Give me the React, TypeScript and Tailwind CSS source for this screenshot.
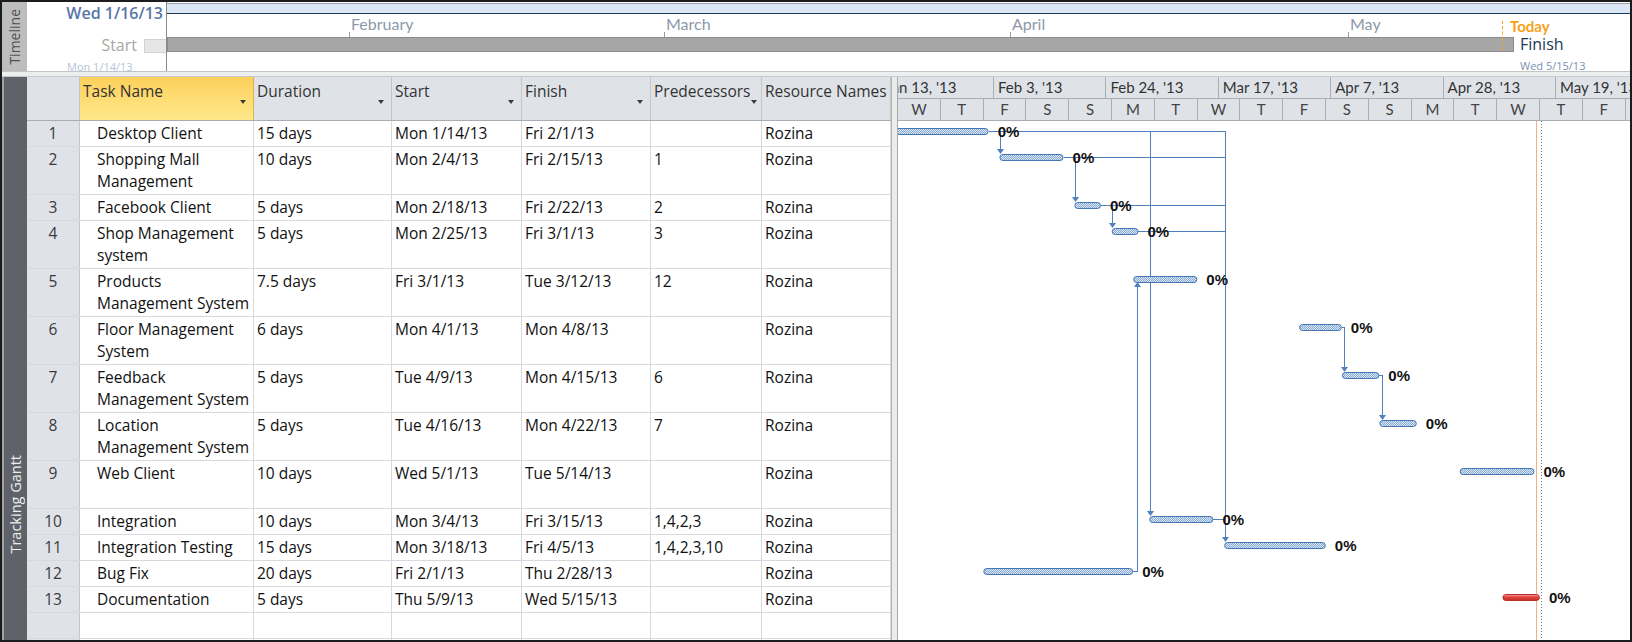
import React from 'react'

type Task = {
  id: number
  name: string[]
  duration: string
  start: string
  finish: string
  pred: string
  tall: boolean
  from: number // days since Jan 13 '13
  to: number
  late?: boolean
}

const tasks: Task[] = [
  { id: 1, name: ['Desktop Client'], duration: '15 days', start: 'Mon 1/14/13', finish: 'Fri 2/1/13', pred: '', tall: false, from: 1, to: 20 },
  { id: 2, name: ['Shopping Mall', 'Management'], duration: '10 days', start: 'Mon 2/4/13', finish: 'Fri 2/15/13', pred: '1', tall: true, from: 22, to: 34 },
  { id: 3, name: ['Facebook Client'], duration: '5 days', start: 'Mon 2/18/13', finish: 'Fri 2/22/13', pred: '2', tall: false, from: 36, to: 41 },
  { id: 4, name: ['Shop Management', 'system'], duration: '5 days', start: 'Mon 2/25/13', finish: 'Fri 3/1/13', pred: '3', tall: true, from: 43, to: 48 },
  { id: 5, name: ['Products', 'Management System'], duration: '7.5 days', start: 'Fri 3/1/13', finish: 'Tue 3/12/13', pred: '12', tall: true, from: 47, to: 59 },
  { id: 6, name: ['Floor Management', 'System'], duration: '6 days', start: 'Mon 4/1/13', finish: 'Mon 4/8/13', pred: '', tall: true, from: 78, to: 86 },
  { id: 7, name: ['Feedback', 'Management System'], duration: '5 days', start: 'Tue 4/9/13', finish: 'Mon 4/15/13', pred: '6', tall: true, from: 86, to: 93 },
  { id: 8, name: ['Location', 'Management System'], duration: '5 days', start: 'Tue 4/16/13', finish: 'Mon 4/22/13', pred: '7', tall: true, from: 93, to: 100 },
  { id: 9, name: ['Web Client'], duration: '10 days', start: 'Wed 5/1/13', finish: 'Tue 5/14/13', pred: '', tall: true, from: 108, to: 122 },
  { id: 10, name: ['Integration'], duration: '10 days', start: 'Mon 3/4/13', finish: 'Fri 3/15/13', pred: '1,4,2,3', tall: false, from: 50, to: 62 },
  { id: 11, name: ['Integration Testing'], duration: '15 days', start: 'Mon 3/18/13', finish: 'Fri 4/5/13', pred: '1,4,2,3,10', tall: false, from: 64, to: 83 },
  { id: 12, name: ['Bug Fix'], duration: '20 days', start: 'Fri 2/1/13', finish: 'Thu 2/28/13', pred: '', tall: false, from: 19, to: 47 },
  { id: 13, name: ['Documentation'], duration: '5 days', start: 'Thu 5/9/13', finish: 'Wed 5/15/13', pred: '', tall: false, from: 116, to: 123, late: true },
]

const weeks = ["Jan 13, '13", "Feb 3, '13", "Feb 24, '13", "Mar 17, '13", "Apr 7, '13", "Apr 28, '13", "May 19, '13"]
const days = ['W', 'T', 'F', 'S', 'S', 'M', 'T', 'W', 'T', 'F', 'S', 'S', 'M', 'T', 'W', 'T', 'F', 'S']
const colWidths = ['w-[174px]', 'w-[138px]', 'w-[130px]', 'w-[129px]', 'w-[111px]', 'w-[129px]']

const dayX = (d: number) => -16.4 + d * 5.352

// row tops inside the chart (chart starts right under the header)
const rowTops: number[] = []
{
  let y = -1
  for (const t of tasks) {
    rowTops.push(y)
    y += t.tall ? 48 : 26
  }
}

const LINK = '#4f81bd'

function HeaderCell({ label, width, arrow, active }: { label: string; width: string; arrow?: boolean; active?: boolean }) {
  return (
    <div
      className={`${width} shrink-0 flex border-r border-[#c3c7cd] pl-[3px] pt-[3px] ${
        active ? 'bg-gradient-to-b from-[#fcd05a] to-[#ffe88a] border-r-[#d9b54a]' : ''
      }`}
    >
      <span className="flex-1 leading-[22px] text-[#333] whitespace-nowrap">{label}</span>
      {arrow && <span className="mt-[20px] mr-[7px] h-0 w-0 shrink-0 border-x-[3.5px] border-x-transparent border-t-[4px] border-t-[#3c3c3c]" />}
    </div>
  )
}

function TaskRow({ t }: { t: Task }) {
  const h = t.tall ? 'h-[48px]' : 'h-[26px]'
  const cell = 'shrink-0 border-r border-[#d6d9dd] pl-[3px] pt-[1px] leading-[22px] whitespace-nowrap'
  return (
    <div className={`flex ${h} shrink-0 border-b border-[#d6d9dd]`}>
      <div className="w-[53px] shrink-0 bg-[#dfe3e8] border-r border-[#c3c7cd] text-center pt-[1px] leading-[22px] text-[#3a3a3a]">
        {t.id}
      </div>
      <div className="w-[174px] shrink-0 border-r border-[#d6d9dd] pl-[17px] pt-[1px] leading-[22px]">
        {t.name.map((n) => (
          <div key={n} className="whitespace-nowrap">{n}</div>
        ))}
      </div>
      <div className={`w-[138px] ${cell}`}>{t.duration}</div>
      <div className={`w-[130px] ${cell}`}>{t.start}</div>
      <div className={`w-[129px] ${cell}`}>{t.finish}</div>
      <div className={`w-[111px] ${cell}`}>{t.pred}</div>
      <div className={`w-[129px] ${cell}`}>Rozina</div>
    </div>
  )
}

function Arrow({ x, y, up }: { x: number; y: number; up?: boolean }) {
  const pts = up ? `${x - 3.5},${y + 5} ${x + 3.5},${y + 5} ${x},${y}` : `${x - 3.5},${y - 5} ${x + 3.5},${y - 5} ${x},${y}`
  return <polygon points={pts} fill={LINK} />
}

function GanttChart() {
  const bar = tasks.map((t, i) => {
    const top = rowTops[i] + 8
    return { x1: dayX(t.from), x2: dayX(t.to), top, mid: top + 3, bottom: top + 6, late: t.late }
  })
  const b = (id: number) => bar[id - 1]

  const xLink10 = 252.5
  const xLink11 = 327.5

  return (
    <svg width={732} height={519} className="block">
      <defs>
        <pattern id="hatch" width="2" height="2" patternUnits="userSpaceOnUse">
          <rect width="2" height="2" fill="#dde8f5" />
          <rect width="1" height="1" fill="#86a9d6" />
          <rect x="1" y="1" width="1" height="1" fill="#86a9d6" />
        </pattern>
        <linearGradient id="red" x1="0" y1="0" x2="0" y2="1">
          <stop offset="0" stopColor="#f6a3a0" />
          <stop offset="0.45" stopColor="#e0413b" />
          <stop offset="1" stopColor="#c42e28" />
        </linearGradient>
      </defs>

      {/* status & finish lines */}
      <line x1={638.5} y1={0} x2={638.5} y2={519} stroke="#f2b184" strokeWidth={1} />
      <line x1={643.5} y1={0} x2={643.5} y2={519} stroke="#7a7a7a" strokeWidth={1} strokeDasharray="1 2" />

      {/* links */}
      <g stroke={LINK} strokeWidth={1} fill="none" shapeRendering="crispEdges">
        {[1, 2, 3, 4, 10].map((id) => (
          <line key={id} x1={b(id).x2} y1={b(id).mid + 0.5} x2={xLink11} y2={b(id).mid + 0.5} />
        ))}
        <line x1={102.5} y1={b(1).mid} x2={102.5} y2={b(2).top - 4} />
        <line x1={177.5} y1={b(2).mid} x2={177.5} y2={b(3).top - 4} />
        <line x1={214.5} y1={b(3).mid} x2={214.5} y2={b(4).top - 4} />
        <line x1={xLink10} y1={b(1).mid} x2={xLink10} y2={b(10).top - 4} />
        <line x1={xLink11} y1={b(1).mid} x2={xLink11} y2={b(11).top - 4} />
        <path d={`M${b(12).x2} ${b(12).mid + 0.5} H239.5 V${b(5).bottom + 4}`} />
        <path d={`M${b(6).x2} ${b(6).mid + 0.5} H446.5 V${b(7).top - 4}`} />
        <path d={`M${b(7).x2} ${b(7).mid + 0.5} H484.5 V${b(8).top - 4}`} />
      </g>
      <Arrow x={102.5} y={b(2).top} />
      <Arrow x={177.5} y={b(3).top} />
      <Arrow x={214.5} y={b(4).top} />
      <Arrow x={xLink10} y={b(10).top} />
      <Arrow x={xLink11} y={b(11).top} />
      <Arrow x={239.5} y={b(5).bottom} up />
      <Arrow x={446.5} y={b(7).top} />
      <Arrow x={484.5} y={b(8).top} />

      {/* bars */}
      {bar.map((r, i) => (
        <rect
          key={i}
          x={r.x1 + 0.5}
          y={r.top + 0.5}
          width={r.x2 - r.x1 - 1}
          height={6}
          rx={3}
          fill={r.late ? 'url(#red)' : 'url(#hatch)'}
          stroke={r.late ? '#b8312b' : '#4577b5'}
          strokeWidth={1}
        />
      ))}

      {/* completion labels */}
      {bar.map((r, i) => (
        <text
          key={i}
          x={r.x2 + 9}
          y={r.mid + 6}
          fontFamily="'Liberation Sans', Arial, sans-serif"
          fontSize={15}
          fontWeight={700}
          fill="#111"
        >
          0%
        </text>
      ))}
    </svg>
  )
}

export default function App() {
  return (
    <div className="w-[1632px] h-[642px] border-2 border-[#1c1c1c] bg-white flex flex-col overflow-hidden font-['Open_Sans',sans-serif] text-[15.5px] text-[#111]">
      {/* timeline */}
      <div className="flex h-[69px] shrink-0">
        <div className="w-[25px] shrink-0 bg-[#bdbdbd] flex items-center justify-center">
          <span className="[writing-mode:vertical-rl] rotate-180 text-[14px] leading-[18px] text-[#505050]">Timeline</span>
        </div>
        <div className="w-[139px] shrink-0 flex flex-col items-end">
          <div className="mt-[1px] pr-[3px] text-[16px] leading-[20px] font-semibold text-[#5775a8]">Wed 1/16/13</div>
          <div className="mt-[15px] flex items-center h-[15px]">
            <span className="text-[16px] leading-[15px] text-[#a7a7a7]">Start</span>
            <span className="ml-[7px] w-[22px] h-[14px] bg-[#e6e6e6] border-y border-l border-[#d2d2d2]" />
          </div>
          <div className="self-start ml-[40px] mt-[8px] text-[11px] leading-[12px] text-[#b6c3d6]">Mon 1/14/13</div>
        </div>
        <div className="flex-1 border-l border-[#8a8a8a] flex flex-col relative">
          <div className="mt-[1px] h-[11px] shrink-0 border-t border-[#9aa4ae] bg-[#dbe7f4] border-b border-b-[#1c3a5e]" />
          <div className="h-[23px] shrink-0 flex items-end font-['Lato',sans-serif] text-[16px] text-[#8d99aa]">
            <div className="w-[182px] shrink-0" />
            {[
              ['February', 'w-[315px]'],
              ['March', 'w-[346px]'],
              ['April', 'w-[338px]'],
              ['May', 'w-[154px]'],
            ].map(([m, w]) => (
              <div key={m} className={`${w} shrink-0 flex flex-col`}>
                <span className="pl-[2px] leading-[16px]">{m}</span>
                <span className="w-px h-[5px] bg-[#9a9a9a]" />
              </div>
            ))}
            <span className="self-start mt-[4px] ml-[8px] font-bold text-[15px] leading-[16px] text-[#f5a31b]">Today</span>
          </div>
          <div className="h-[15px] shrink-0 flex items-center">
            <div className="w-[1347px] h-[15px] shrink-0 bg-[#a6a6a6] border border-[#8a8a8a]" />
            <span className="ml-[6px] text-[16px] leading-[15px] text-[#1b3755]">Finish</span>
          </div>
          <div className="ml-[1353px] mt-[8px] text-[11px] leading-[12px] text-[#7990b3] whitespace-nowrap">Wed 5/15/13</div>
          <div className="absolute left-[1335px] top-[19px] h-[29px] border-l border-dashed border-[#f5a31b]" />
        </div>
      </div>

      {/* separator */}
      <div className="h-[6px] shrink-0 border-t border-[#c4c4c4] bg-[#eceef0] border-b border-b-[#c6cad0]" />

      {/* main view */}
      <div className="flex flex-1 min-h-0">
        <div className="w-[25px] shrink-0 bg-[#5f6268] border-l-2 border-[#a2a2a2] flex flex-col justify-end items-center pb-[86px]">
          <span className="[writing-mode:vertical-rl] rotate-180 text-[14.5px] leading-[18px] text-[#eeeeee]">Tracking Gantt</span>
        </div>

        {/* sheet */}
        <div className="w-[864px] shrink-0 flex flex-col">
          <div className="flex h-[44px] shrink-0 bg-[#dfe3e8] border-b border-[#a9aeb5]">
            <HeaderCell label="" width="w-[53px]" />
            <HeaderCell label="Task Name" width="w-[174px]" arrow active />
            <HeaderCell label="Duration" width="w-[138px]" arrow />
            <HeaderCell label="Start" width="w-[130px]" arrow />
            <HeaderCell label="Finish" width="w-[129px]" arrow />
            <HeaderCell label="Predecessors" width="w-[111px]" arrow />
            <HeaderCell label="Resource Names" width="w-[129px]" />
          </div>
          {tasks.map((t) => (
            <TaskRow key={t.id} t={t} />
          ))}
          <div className="flex h-[26px] shrink-0 border-b border-[#d6d9dd]">
            <div className="w-[53px] shrink-0 bg-[#dfe3e8] border-r border-[#c3c7cd]" />
            {colWidths.map((w, i) => (
              <div key={i} className={`${w} shrink-0 border-r border-[#d6d9dd]`} />
            ))}
          </div>
          <div className="flex flex-1">
            <div className="w-[53px] shrink-0 bg-[#dfe3e8] border-r border-[#c3c7cd]" />
            {colWidths.map((w, i) => (
              <div key={i} className={`${w} shrink-0 border-r border-[#d6d9dd]`} />
            ))}
          </div>
        </div>

        {/* splitter */}
        <div className="w-[7px] shrink-0 border-l border-[#b4b4b4] bg-[#ececec] border-r border-r-[#a9a9a9]" />

        {/* gantt */}
        <div className="flex-1 min-w-0 flex flex-col">
          <div className="h-[22px] shrink-0 overflow-hidden bg-[#dfe3e8] border-b border-[#a9aeb5] font-['Lato',sans-serif] text-[15px] text-[#333]">
            <div className="flex ml-[-16.4px]">
              {weeks.map((w) => (
                <div key={w} className="w-[112.4px] shrink-0 h-[22px] border-r border-[#a9aeb5] pl-[4px] leading-[21px] whitespace-nowrap">
                  {w}
                </div>
              ))}
            </div>
          </div>
          <div className="h-[22px] shrink-0 overflow-hidden bg-[#dfe3e8] border-b border-[#a9aeb5] font-['Lato',sans-serif] text-[15px] text-[#444]">
            <div className="flex">
              {days.map((d, i) => (
                <div key={i} className="w-[42.8px] shrink-0 h-[21px] border-r border-[#a9aeb5] text-center leading-[21px]">
                  {d}
                </div>
              ))}
            </div>
          </div>
          <GanttChart />
        </div>
      </div>
    </div>
  )
}
